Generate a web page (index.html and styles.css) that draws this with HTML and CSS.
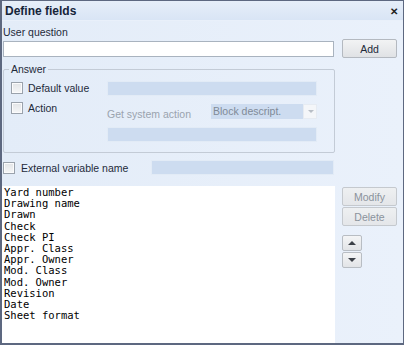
FILE: index.html
```html
<!DOCTYPE html>
<html lang="en">
<head>
    <meta charset="UTF-8" />
    <title>Define fields</title>
    <link rel="stylesheet" href="styles.css">
</head>
<body>
    <div class="window">
        <div class="titlebar">
            <span class="title">Define fields</span>
            <span class="close">&#x2715;</span>
        </div>
        <div class="content">
            <div class="left">
                <div class="label">User question</div>
                <input class="text-input" type="text" />

                <div class="group">
                    <span class="legend">Answer</span>
                    <div class="group-row">
                        <label class="check"><span class="box"></span>Default value</label>
                        <div class="field disabled wide"></div>
                    </div>
                    <div class="group-row action-row">
                        <label class="check"><span class="box"></span>Action</label>
                        <div class="action-fields">
                            <div class="system-row">
                                <span class="muted">Get system action</span>
                                <div class="select">
                                    <span class="select-value">Block descript.</span>
                                    <span class="select-arrow"></span>
                                </div>
                            </div>
                            <div class="field disabled wide"></div>
                        </div>
                    </div>
                </div>

                <div class="ext-row">
                    <label class="check"><span class="box"></span>External variable name</label>
                    <div class="field disabled ext-field"></div>
                </div>

                <div class="list">
                    <div>Yard number</div>
                    <div>Drawing name</div>
                    <div>Drawn</div>
                    <div>Check</div>
                    <div>Check PI</div>
                    <div>Appr. Class</div>
                    <div>Appr. Owner</div>
                    <div>Mod. Class</div>
                    <div>Mod. Owner</div>
                    <div>Revision</div>
                    <div>Date</div>
                    <div>Sheet format</div>
                </div>
            </div>

            <div class="right">
                <button class="btn add">Add</button>
                <div class="side-buttons">
                    <button class="btn grey">Modify</button>
                    <button class="btn grey">Delete</button>
                    <div class="arrows">
                        <button class="arrow"><span class="tri up"></span></button>
                        <button class="arrow"><span class="tri down"></span></button>
                    </div>
                </div>
            </div>
        </div>
    </div>
</body>
</html>
```

FILE: styles.css
```css
body {
    margin: 0;
    font-family: "Liberation Sans", Arial, sans-serif;
    font-size: 10.5px;
    color: #1e2a3a;
}

.window {
    width: 404px;
    height: 345px;
    box-sizing: border-box;
    border: 1px solid #5d6880;
    border-left-width: 2px;
    border-bottom-width: 2px;
    background: linear-gradient(to right, #e3ecf8, #eaf1fb);
    display: flex;
    flex-direction: column;
}

.titlebar {
    height: 19px;
    flex: none;
    display: flex;
    align-items: center;
    justify-content: space-between;
    padding: 0 5px 0 3px;
    background: linear-gradient(#e6eef9, #d9e5f5);
    border-bottom: 1px solid #e9f0fa;
}

.title {
    font-weight: bold;
    font-size: 12px;
    color: #15243a;
}

.close {
    font-size: 9.5px;
    font-weight: bold;
    color: #222;
    margin-top: 1px;
}

.content {
    flex: 1;
    display: flex;
    padding-left: 1px;
    min-height: 0;
}

.left {
    width: 332px;
    display: flex;
    flex-direction: column;
}

.label {
    margin-top: 4px;
    margin-bottom: 2px;
    height: 14px;
    line-height: 14px;
}

.text-input {
    box-sizing: border-box;
    width: 331px;
    height: 16px;
    margin: 0;
    border: 1px solid #a9b3bf;
    background: #fff;
}

.group {
    position: relative;
    box-sizing: border-box;
    width: 332px;
    height: 84px;
    margin-top: 12px;
    border: 1px solid #c3cbd6;
    border-radius: 2px;
    padding: 11px 0 0 7px;
}

.legend {
    position: absolute;
    left: 5px;
    top: -8px;
    padding: 0 2px;
    background: #e4edf8;
    line-height: 14px;
}

.group-row {
    display: flex;
    align-items: flex-start;
}

.action-row {
    margin-top: 5px;
}

.check {
    display: flex;
    align-items: center;
    gap: 5px;
    width: 96px;
    height: 14px;
    line-height: 14px;
}

.box {
    width: 10px;
    height: 10px;
    flex: none;
    border: 1px solid #9aa2ac;
    background: linear-gradient(#e2e4e7, #f6f7f8);
    box-shadow: inset 0 0 0 1px #fbfbfc;
}

.field {
    box-sizing: border-box;
    height: 15px;
}

.disabled {
    background: #cddcf0;
    border: 1px solid #e2ebf6;
}

.wide {
    width: 210px;
}

.action-fields {
    display: flex;
    flex-direction: column;
}

.system-row {
    display: flex;
    justify-content: space-between;
    align-items: center;
    width: 210px;
    height: 15px;
    margin-top: 3px;
    margin-bottom: 8px;
}

.muted {
    color: #9aa3ae;
    padding-top: 5px;
}

.select {
    display: flex;
    width: 106px;
    height: 15px;
}

.select-value {
    flex: 1;
    background: #cddcf0;
    color: #7f8a97;
    padding-left: 2px;
    line-height: 15px;
}

.select-arrow {
    width: 14px;
    background: #f4f6f9;
    border: 1px solid #e6ebf2;
    box-sizing: border-box;
    position: relative;
}

.select-arrow::after {
    content: "";
    position: absolute;
    left: 4px;
    top: 5px;
    border-left: 3px solid transparent;
    border-right: 3px solid transparent;
    border-top: 3px solid #b8bec6;
}

.ext-row {
    display: flex;
    align-items: center;
    justify-content: space-between;
    margin-top: 7px;
    width: 331px;
}

.ext-row .check {
    width: auto;
    gap: 6px;
}

.ext-field {
    width: 183px;
}

.list {
    margin-top: 11px;
    flex: 1;
    background: #fff;
    font-family: "DejaVu Sans Mono", monospace;
    font-size: 10.5px;
    line-height: 11.2px;
    color: #000;
    padding: 1px 0 0 2px;
    margin-left: -1px;
}

.right {
    flex: 1;
    padding: 18px 0 0 7px;
    display: flex;
    flex-direction: column;
}

.btn {
    box-sizing: border-box;
    width: 55px;
    height: 19px;
    margin: 0;
    padding: 0;
    font-family: inherit;
    font-size: 10.5px;
    border: 1px solid #b4b9c0;
    border-radius: 2px;
    background: linear-gradient(#f2f3f4, #e0e2e5);
    color: #1e2a3a;
}

.side-buttons {
    margin-top: 129px;
    display: flex;
    flex-direction: column;
    gap: 1px;
}

.grey {
    color: #8b939c;
    border-color: #c5c9ce;
    background: linear-gradient(#eef0f2, #e4e6e9);
}

.arrows {
    margin-top: 8px;
    display: flex;
    flex-direction: column;
    gap: 1px;
}

.arrow {
    box-sizing: border-box;
    width: 20px;
    height: 16px;
    padding: 0;
    border: 1px solid #b8bdc3;
    border-radius: 2px;
    background: linear-gradient(#f4f5f6, #e2e4e7);
    display: flex;
    align-items: center;
    justify-content: center;
}

.tri {
    width: 0;
    height: 0;
    border-left: 4px solid transparent;
    border-right: 4px solid transparent;
}

.tri.up {
    border-bottom: 4px solid #3c4148;
}

.tri.down {
    border-top: 4px solid #3c4148;
}
```
